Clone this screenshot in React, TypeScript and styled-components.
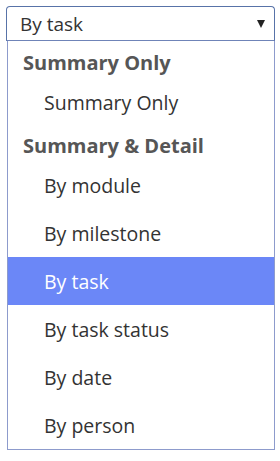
import React from "react";
import styled, { createGlobalStyle } from "styled-components";

const Global = createGlobalStyle`
  html, body { margin: 0; padding: 0; background: #ffffff; }
  body { font-family: "Open Sans", "Noto Sans", sans-serif; }
`;

const Wrap = styled.div`
  width: 280px;
  height: 461px;
  padding: 6px 5px 0 6px;
  box-sizing: border-box;
  display: flex;
  flex-direction: column;
`;

const Select = styled.div`
  height: 35px;
  box-sizing: border-box;
  border: 1px solid #5873a8;
  border-bottom-color: #6f84b8;
  border-radius: 4px 4px 0 0;
  display: flex;
  align-items: center;
  justify-content: space-between;
  padding: 0 9px 0 13px;
  font-size: 19px;
  color: #333333;
`;

const Caret = styled.svg`
  width: 8px;
  height: 8px;
  display: block;
`;

const List = styled.div`
  margin-left: 1px;
  border: 1px solid #8d9bcc;
  border-top: none;
  display: flex;
  flex-direction: column;
  box-sizing: border-box;
  padding-top: 2px;
`;

const Group = styled.div`
  height: 35px;
  box-sizing: border-box;
  padding: 4px 0 0 15px;
  display: flex;
  align-items: center;
  font-size: 20px;
  font-weight: 700;
  color: #565656;
`;

const Option = styled.div<{ $active?: boolean }>`
  height: 48px;
  display: flex;
  align-items: center;
  padding-left: 36px;
  font-size: 19.5px;
  color: ${(p) => (p.$active ? "#ffffff" : "#333333")};
  background: ${(p) => (p.$active ? "#6b87f7" : "transparent")};
`;

const groups: { label: string; items: string[] }[] = [
  { label: "Summary Only", items: ["Summary Only"] },
  {
    label: "Summary & Detail",
    items: ["By module", "By milestone", "By task", "By task status", "By date", "By person"],
  },
];

export default function App() {
  const selected = "By task";
  return (
    <>
      <Global />
      <Wrap>
        <Select>
          <span>{selected}</span>
          <Caret viewBox="0 0 8 8">
            <polygon points="0,0 8,0 4,8" fill="#222" />
          </Caret>
        </Select>
        <List>
          {groups.map((g) => (
            <React.Fragment key={g.label}>
              <Group>{g.label}</Group>
              {g.items.map((it) => (
                <Option key={it} $active={it === selected}>
                  {it}
                </Option>
              ))}
            </React.Fragment>
          ))}
        </List>
      </Wrap>
    </>
  );
}
